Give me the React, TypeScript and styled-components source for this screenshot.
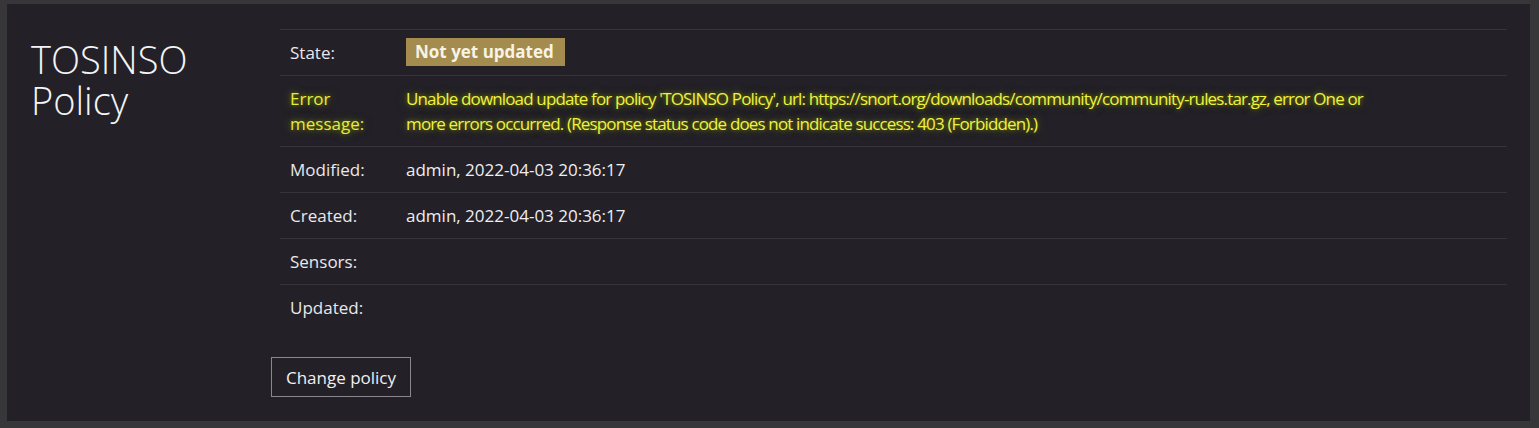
import React from "react";
import styled, { createGlobalStyle } from "styled-components";

const GlobalStyle = createGlobalStyle`
  html, body {
    margin: 0;
    padding: 0;
    background: #373639;
  }
  body {
    font-family: "Open Sans", "Noto Sans", sans-serif;
    color: #ecebee;
  }
`;

const rows = [
  { label: "State:", kind: "badge", value: "Not yet updated" },
  {
    label: "Error message:",
    kind: "error",
    value:
      "Unable download update for policy 'TOSINSO Policy', url: https://snort.org/downloads/community/community-rules.tar.gz, error One or more errors occurred. (Response status code does not indicate success: 403 (Forbidden).)",
  },
  { label: "Modified:", kind: "text", value: "admin, 2022-04-03 20:36:17" },
  { label: "Created:", kind: "text", value: "admin, 2022-04-03 20:36:17" },
  { label: "Sensors:", kind: "text", value: "" },
  { label: "Updated:", kind: "text", value: "" },
];

const App = () => {
  return (
    <>
      <GlobalStyle />
      <Page>
        <Panel>
          <Side>
            <Title>TOSINSO Policy</Title>
          </Side>
          <Main>
            <Table>
              {rows.map((r) => (
                <Row key={r.label}>
                  <Label $error={r.kind === "error"}>{r.label}</Label>
                  <Value $error={r.kind === "error"}>
                    {r.kind === "badge" ? (
                      <Badge>{r.value}</Badge>
                    ) : r.kind === "error" ? (
                      <ErrorText>{r.value}</ErrorText>
                    ) : (
                      r.value
                    )}
                  </Value>
                </Row>
              ))}
            </Table>
            <Button>Change policy</Button>
          </Main>
        </Panel>
      </Page>
    </>
  );
};

export default App;

const Page = styled.div`
  width: 1539px;
  height: 428px;
  padding: 4px 9px 7px 7px;
  box-sizing: border-box;
`;

const Panel = styled.div`
  display: flex;
  height: 100%;
  background: #232127;
  box-sizing: border-box;
  padding: 25px 23px 24px 0;
`;

const Side = styled.div`
  width: 264px;
  flex-shrink: 0;
  padding: 10px 0 0 24px;
  box-sizing: border-box;
`;

const Title = styled.h1`
  margin: 0;
  font-size: 38px;
  line-height: 41px;
  font-weight: 300;
  color: #f4f4f6;
  width: 200px;
`;

const Main = styled.div`
  flex: 1;
  display: flex;
  flex-direction: column;
  align-items: flex-start;
`;

const Table = styled.div`
  align-self: stretch;
  margin-left: 9px;
  font-size: 17px;
  line-height: 25px;
`;

const Row = styled.div`
  display: flex;
  border-top: 1px solid #36343b;
`;

const glow = "0 0 4px rgba(150, 160, 0, 0.7), 0 0 10px rgba(120, 130, 0, 0.6)";

const Label = styled.div<{ $error?: boolean }>`
  width: 96px;
  flex-shrink: 0;
  padding: 10px;
  color: ${(p) => (p.$error ? "#e4ec3e" : "#e9e8ec")};
  text-shadow: ${(p) => (p.$error ? glow : "none")};
`;

const Value = styled.div<{ $error?: boolean }>`
  flex: 1;
  padding: 10px;
  color: ${(p) => (p.$error ? "#eef242" : "#efeef1")};
  text-shadow: ${(p) => (p.$error ? glow : "none")};
`;

const ErrorText = styled.div`
  max-width: 990px;
  letter-spacing: -0.85px;
`;

const Badge = styled.span`
  display: inline-block;
  margin: -2px 0 -1px;
  padding: 0 11px 0 9px;
  line-height: 28px;
  height: 28px;
  font-weight: 700;
  background: #a38c4d;
  color: #f7f3e6;
  vertical-align: top;
`;

const Button = styled.button`
  margin-top: 27px;
  height: 40px;
  width: 140px;
  background: transparent;
  border: 1px solid #8a888e;
  color: #f0eff2;
  font-family: "Open Sans", "Noto Sans", sans-serif;
  font-size: 17px;
  padding: 0;
  cursor: pointer;
`;
